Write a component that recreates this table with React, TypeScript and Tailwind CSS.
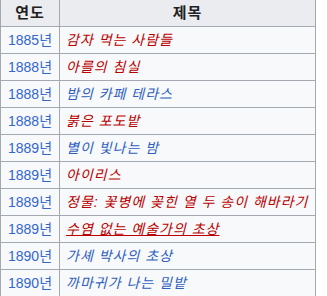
const rows: { year: string; title: string; red: boolean; underline?: boolean }[] = [
  { year: "1885년", title: "감자 먹는 사람들", red: true },
  { year: "1888년", title: "아를의 침실", red: true },
  { year: "1888년", title: "밤의 카페 테라스", red: false },
  { year: "1888년", title: "붉은 포도밭", red: true },
  { year: "1889년", title: "별이 빛나는 밤", red: false },
  { year: "1889년", title: "아이리스", red: true },
  { year: "1889년", title: "정물: 꽃병에 꽂힌 열 두 송이 해바라기", red: true },
  { year: "1889년", title: "수염 없는 예술가의 초상", red: true, underline: true },
  { year: "1890년", title: "가셰 박사의 초상", red: false },
  { year: "1890년", title: "까마귀가 나는 밀밭", red: false },
];

export default function App() {
  return (
    <div className="h-[296px] w-[327px] overflow-hidden bg-white text-[14px] text-[#202122] [font-family:'Liberation_Sans','Noto_Sans_CJK_KR',sans-serif]">
      <div className="flex h-[27px] w-[316px] border-x border-b border-[#a2a9b1] bg-[#eaecf0] text-[15px] font-bold tracking-[1px]">
        <div className="flex w-[59px] items-center justify-center border-r border-[#a2a9b1]">연도</div>
        <div className="flex flex-1 items-center justify-center">제목</div>
      </div>
      {rows.map((r, i) => (
        <div key={i} className="flex h-[27px] w-[316px] border-x border-b border-[#a2a9b1] bg-[#f8f9fa]">
          <div className="flex w-[59px] items-center border-r border-[#a2a9b1] pl-[7px] text-[#3366cc]">{r.year}</div>
          <div className="flex flex-1 items-center pl-[6px]">
            <span className={`italic whitespace-nowrap tracking-[1px] ${r.red ? "text-[#ba0000]" : "text-[#2f5fc0]"} ${r.underline ? "underline" : ""}`}>
              {r.title}
            </span>
          </div>
        </div>
      ))}
    </div>
  );
}
